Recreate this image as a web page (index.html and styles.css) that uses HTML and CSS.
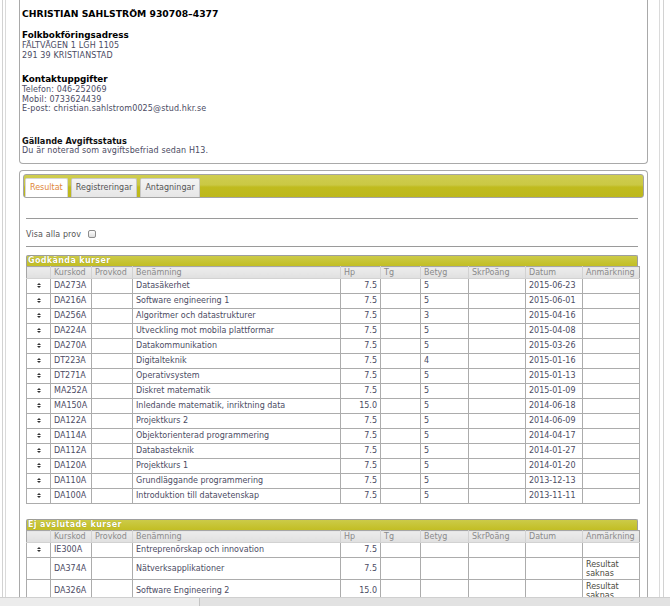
FILE: index.html
```html
<!DOCTYPE html>
<html lang="sv">
<head>
<meta charset="utf-8">
<title>Studiedokumentation</title>
<link rel="stylesheet" href="styles.css">
</head>
<body>
<div class="outer">
  <div class="inner">
    <section class="panel info">
      <div class="name">CHRISTIAN SAHLSTRÖM 930708–4377</div>
      <div class="heading">Folkbokföringsadress</div>
      <div class="line">FÄLTVÄGEN 1 LGH 1105</div>
      <div class="line">291 39 KRISTIANSTAD</div>
      <div class="heading h2">Kontaktuppgifter</div>
      <div class="line">Telefon: 046-252069</div>
      <div class="line">Mobil: 0733624439</div>
      <div class="line">E-post: christian.sahlstrom0025@stud.hkr.se</div>
      <div class="subheading">Gällande Avgiftsstatus</div>
      <div class="line">Du är noterad som avgiftsbefriad sedan H13.</div>
    </section>

    <section class="panel results">
      <div class="tabbar">
        <span class="tab active">Resultat</span>
        <span class="tab">Registreringar</span>
        <span class="tab">Antagningar</span>
      </div>
      <div class="content">
        <div class="rule rule1"></div>
        <label class="showall">Visa alla prov <span class="check"></span></label>
        <div class="rule rule2"></div>

        <div class="sectionhead">Godkända kurser</div>
        <table class="grid">
          <colgroup>
            <col class="c-icon"><col class="c-code"><col class="c-code"><col class="c-name">
            <col class="c-hp"><col class="c-hp"><col class="c-grade"><col class="c-wide"><col class="c-wide"><col class="c-wide">
          </colgroup>
          <thead>
            <tr><th></th><th>Kurskod</th><th>Provkod</th><th>Benämning</th><th>Hp</th><th>Tg</th><th>Betyg</th><th>SkrPoäng</th><th>Datum</th><th>Anmärkning</th></tr>
          </thead>
          <tbody>
            <tr><td class="ic"><span class="sort"></span></td><td>DA273A</td><td></td><td>Datasäkerhet</td><td class="num">7.5</td><td></td><td>5</td><td></td><td>2015-06-23</td><td></td></tr>
            <tr><td class="ic"><span class="sort"></span></td><td>DA216A</td><td></td><td>Software engineering 1</td><td class="num">7.5</td><td></td><td>5</td><td></td><td>2015-06-01</td><td></td></tr>
            <tr><td class="ic"><span class="sort"></span></td><td>DA256A</td><td></td><td>Algoritmer och datastrukturer</td><td class="num">7.5</td><td></td><td>3</td><td></td><td>2015-04-16</td><td></td></tr>
            <tr><td class="ic"><span class="sort"></span></td><td>DA224A</td><td></td><td>Utveckling mot mobila plattformar</td><td class="num">7.5</td><td></td><td>5</td><td></td><td>2015-04-08</td><td></td></tr>
            <tr><td class="ic"><span class="sort"></span></td><td>DA270A</td><td></td><td>Datakommunikation</td><td class="num">7.5</td><td></td><td>5</td><td></td><td>2015-03-26</td><td></td></tr>
            <tr><td class="ic"><span class="sort"></span></td><td>DT223A</td><td></td><td>Digitalteknik</td><td class="num">7.5</td><td></td><td>4</td><td></td><td>2015-01-16</td><td></td></tr>
            <tr><td class="ic"><span class="sort"></span></td><td>DT271A</td><td></td><td>Operativsystem</td><td class="num">7.5</td><td></td><td>5</td><td></td><td>2015-01-13</td><td></td></tr>
            <tr><td class="ic"><span class="sort"></span></td><td>MA252A</td><td></td><td>Diskret matematik</td><td class="num">7.5</td><td></td><td>5</td><td></td><td>2015-01-09</td><td></td></tr>
            <tr><td class="ic"><span class="sort"></span></td><td>MA150A</td><td></td><td>Inledande matematik, inriktning data</td><td class="num">15.0</td><td></td><td>5</td><td></td><td>2014-06-18</td><td></td></tr>
            <tr><td class="ic"><span class="sort"></span></td><td>DA122A</td><td></td><td>Projektkurs 2</td><td class="num">7.5</td><td></td><td>5</td><td></td><td>2014-06-09</td><td></td></tr>
            <tr><td class="ic"><span class="sort"></span></td><td>DA114A</td><td></td><td>Objektorienterad programmering</td><td class="num">7.5</td><td></td><td>5</td><td></td><td>2014-04-17</td><td></td></tr>
            <tr><td class="ic"><span class="sort"></span></td><td>DA112A</td><td></td><td>Databasteknik</td><td class="num">7.5</td><td></td><td>5</td><td></td><td>2014-01-27</td><td></td></tr>
            <tr><td class="ic"><span class="sort"></span></td><td>DA120A</td><td></td><td>Projektkurs 1</td><td class="num">7.5</td><td></td><td>5</td><td></td><td>2014-01-20</td><td></td></tr>
            <tr><td class="ic"><span class="sort"></span></td><td>DA110A</td><td></td><td>Grundläggande programmering</td><td class="num">7.5</td><td></td><td>5</td><td></td><td>2013-12-13</td><td></td></tr>
            <tr><td class="ic"><span class="sort"></span></td><td>DA100A</td><td></td><td>Introduktion till datavetenskap</td><td class="num">7.5</td><td></td><td>5</td><td></td><td>2013-11-11</td><td></td></tr>
          </tbody>
        </table>

        <div class="sectionhead second">Ej avslutade kurser</div>
        <table class="grid">
          <colgroup>
            <col class="c-icon"><col class="c-code"><col class="c-code"><col class="c-name">
            <col class="c-hp"><col class="c-hp"><col class="c-grade"><col class="c-wide"><col class="c-wide"><col class="c-wide">
          </colgroup>
          <thead>
            <tr><th></th><th>Kurskod</th><th>Provkod</th><th>Benämning</th><th>Hp</th><th>Tg</th><th>Betyg</th><th>SkrPoäng</th><th>Datum</th><th>Anmärkning</th></tr>
          </thead>
          <tbody>
            <tr><td class="ic"><span class="sort"></span></td><td>IE300A</td><td></td><td>Entreprenörskap och innovation</td><td class="num">7.5</td><td></td><td></td><td></td><td></td><td></td></tr>
            <tr class="tall"><td class="ic"></td><td>DA374A</td><td></td><td>Nätverksapplikationer</td><td class="num">7.5</td><td></td><td></td><td></td><td></td><td class="note">Resultat saknas</td></tr>
            <tr class="tall"><td class="ic"></td><td>DA326A</td><td></td><td>Software Engineering 2</td><td class="num">15.0</td><td></td><td></td><td></td><td></td><td class="note">Resultat saknas</td></tr>
          </tbody>
        </table>
      </div>
    </section>
  </div>
</div>
<div class="hscroll"><div class="thumb"></div></div>
</body>
</html>
```

FILE: styles.css
```css
html, body {
  margin: 0;
  padding: 0;
  background: #fff;
  overflow: hidden;
  height: 606px;
}
body {
  font-family: "DejaVu Sans", Verdana, sans-serif;
  font-size: 8px;
  color: #4b4b63;
}
.outer {
  margin: 0 6px 0 2px;
  border-left: 1px solid #d2d2d2;
  border-right: 1px solid #d2d2d2;
  padding: 0 3px 0 2px;
  min-height: 606px;
}
.inner {
  border-left: 1px solid #dadada;
  border-right: 1px solid #dadada;
  padding: 0 11px 0 13px;
  min-height: 606px;
}
.panel {
  border: 1px solid #a9a9a9;
  background: #fff;
}
.info {
  border-top: none;
  border-radius: 0 0 4px 4px;
  padding: 8px 3px 8px 2px;
}
.name {
  font-weight: bold;
  font-size: 9.25px;
  line-height: 12px;
  color: #000;
}
.heading {
  font-weight: bold;
  font-size: 8.8px;
  line-height: 11px;
  color: #000;
  margin-top: 10px;
}
.heading.h2 { margin-top: 14px; }
.line {
  line-height: 9.5px;
  letter-spacing: 0.12px;
}
.subheading {
  font-weight: bold;
  font-size: 8.2px;
  line-height: 10px;
  color: #111;
  margin-top: 22px;
}
.results {
  margin-top: 6px;
  border-radius: 4px 4px 0 0;
  border-bottom: none;
  padding: 3px 3px 0 3px;
  min-height: 440px;
}
.tabbar {
  height: 20px;
  border: 1px solid #a4a4a4;
  border-radius: 3px;
  background: linear-gradient(#cfcd4f 0%, #cac844 45%, #c0bb1e 55%, #bdb81c 100%);
  padding: 2px 0 0 1px;
  display: flex;
  align-items: flex-end;
  gap: 3px;
  box-sizing: content-box;
}
.tab {
  height: 19px;
  box-sizing: border-box;
  padding: 0 4px;
  line-height: 18px;
  background: linear-gradient(#f4f4f4, #e6e6e6);
  border: 1px solid #c8c8c8;
  border-bottom: none;
  border-radius: 2px 2px 0 0;
  color: #555;
  font-size: 8px;
}
.tab.active {
  background: #fff;
  color: #e0873a;
  border-color: #d6d6d6;
}
.content {
  padding: 0 6px 0 3px;
}
.rule {
  border-top: 1px solid #9a9a9a;
  height: 0;
}
.rule1 { margin-top: 20px; }
.showall {
  display: flex;
  align-items: center;
  gap: 7px;
  height: 12px;
  margin-top: 9px;
  color: #555;
  letter-spacing: 0.1px;
}
.check {
  width: 6px;
  height: 6px;
  border: 1px solid #8c8c8c;
  border-radius: 2px;
  background: linear-gradient(#fdfdfd, #dedede);
}
.rule2 { margin-top: 6px; }
.sectionhead {
  margin-top: 8px;
  height: 10px;
  line-height: 10px;
  border: 1px solid #9e9e9e;
  border-bottom: none;
  border-radius: 2px 2px 0 0;
  background: linear-gradient(#cccb48, #c2be24);
  color: #fff;
  font-weight: bold;
  font-size: 8px;
  letter-spacing: 0.35px;
  padding-left: 1px;
  text-shadow: 0 0 1px #8a8600;
}
.sectionhead.second { margin-top: 15px; }
.grid {
  border-collapse: collapse;
  table-layout: fixed;
  width: 614px;
}
.c-icon { width: 24px; }
.c-code { width: 41px; }
.c-name { width: 208px; }
.c-hp { width: 40px; }
.c-grade { width: 48px; }
.c-wide { width: 57px; }
.grid th {
  height: 11px;
  padding: 0 3px;
  background: linear-gradient(#ececec, #e0e0e0);
  border: 1px solid #d2d2d2;
  border-top: 1px solid #a6a6a6;
  color: #8a8a8a;
  font-weight: normal;
  text-align: left;
  line-height: 11px;
  white-space: nowrap;
  overflow: hidden;
}
.grid th:first-child { border-left: 1px solid #a6a6a6; }
.grid th:last-child { border-right: 1px solid #a6a6a6; }
.grid td {
  height: 14px;
  padding: 0 3px;
  border: 1px solid #acacac;
  line-height: 10px;
  white-space: nowrap;
  overflow: hidden;
  color: #4b4b63;
}
.grid td.num { text-align: right; }
.grid td.ic { text-align: center; padding: 0; }
.grid tr.tall td { height: 21px; }
.grid td.note {
  white-space: normal;
  line-height: 9px;
  color: #4b4b40;
}
.sort {
  display: inline-block;
  width: 0;
  height: 0;
  position: relative;
  vertical-align: middle;
  border-left: 2px solid transparent;
  border-right: 2px solid transparent;
  border-bottom: 2.5px solid #333;
  margin-bottom: 3px;
}
.sort::after {
  content: "";
  position: absolute;
  left: -2px;
  top: 3px;
  border-left: 2px solid transparent;
  border-right: 2px solid transparent;
  border-top: 2.5px solid #333;
}
.hscroll {
  position: fixed;
  left: 0;
  right: 0;
  bottom: 0;
  height: 8px;
  background: #e2e2e2;
  border-top: 1px solid #cfcfcf;
}
.thumb {
  width: 199px;
  height: 8px;
  background: #ececec;
  border-right: 1px solid #c4c4c4;
}
```
